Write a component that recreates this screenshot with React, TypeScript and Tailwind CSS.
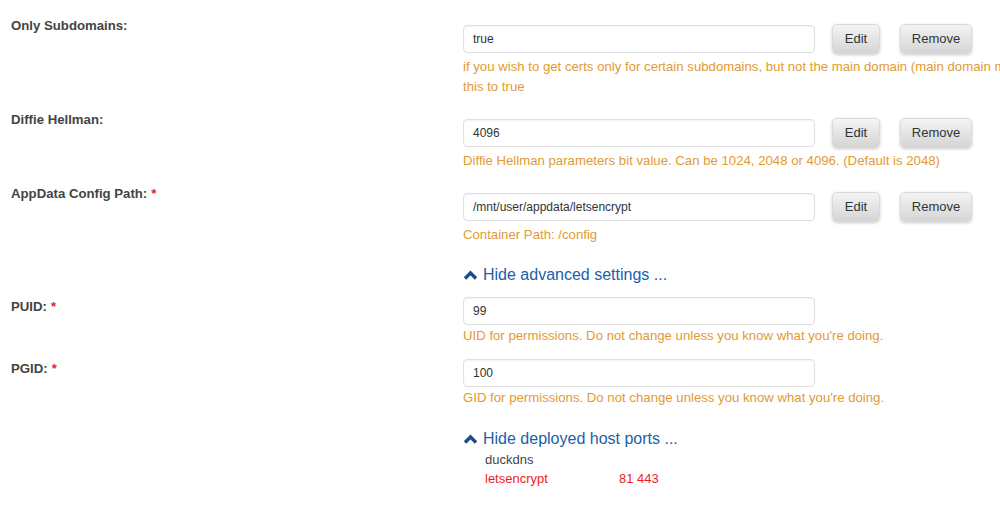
import React from 'react';

const font = "font-['Liberation_Sans',Arial,sans-serif]";

const Label: React.FC<{ text: string; required?: boolean }> = ({ text, required }) => (
    <div className="w-[463px] shrink-0 pl-[11px] text-[13.2px] leading-5 font-bold text-[#444]">
        {text}
        {required && <span className="ml-[4px] text-[#e21f1f]">*</span>}
    </div>
);

const Field: React.FC<{ value: string }> = ({ value }) => (
    <div className="w-[352px] h-[28px] flex items-center px-[9px] bg-white border border-[#e0e0e0] rounded-[4px] shadow-[inset_0_1px_2px_rgba(0,0,0,0.06)] text-[12px] text-[#333]">
        {value}
    </div>
);

const Btn: React.FC<{ label: string; className: string }> = ({ label, className }) => (
    <button className={`h-[30px] rounded-[5px] bg-gradient-to-b from-[#f4f4f4] to-[#d5d5d5] border border-[#dadada] shadow-[0_1px_3px_rgba(0,0,0,0.22)] text-[13px] text-[#333] ${className}`}>
        {label}
    </button>
);

const Desc: React.FC<{ children: React.ReactNode; className?: string }> = ({ children, className = '' }) => (
    <div className={`text-[13.2px] leading-5 text-[#e29a34] whitespace-nowrap ${className}`}>{children}</div>
);

const Toggle: React.FC<{ text: string; className?: string }> = ({ text, className = '' }) => (
    <div className={`flex items-center h-[22px] text-[16px] text-[#2060a8] ${className}`}>
        <svg width="15" height="10" viewBox="0 0 15 10" className="mr-[5px]">
            <polyline points="2,8.5 7.5,3 13,8.5" fill="none" stroke="#164d8c" strokeWidth="3.4" />
        </svg>
        {text}
    </div>
);

export default function App() {
    return (
        <div className={`w-[1000px] h-[506px] overflow-hidden bg-white ${font}`}>
            <div className="pt-[16px]">
                {/* Only Subdomains */}
                <div className="flex">
                    <Label text="Only Subdomains:" />
                    <div className="pt-[8px]">
                        <div className="flex items-center h-[30px]">
                            <Field value="true" />
                            <Btn label="Edit" className="w-[48px] ml-[17px]" />
                            <Btn label="Remove" className="w-[72px] ml-[20px]" />
                        </div>
                        <Desc className="mt-[3px]">
                            if you wish to get certs only for certain subdomains, but not the main domain (main domain may be hosted on another machine and cannot be validated), set
                            <br />
                            this to true
                        </Desc>
                    </div>
                </div>

                {/* Diffie Hellman */}
                <div className="flex mt-[13px]">
                    <Label text="Diffie Hellman:" />
                    <div className="pt-[8px]">
                        <div className="flex items-center h-[30px]">
                            <Field value="4096" />
                            <Btn label="Edit" className="w-[48px] ml-[17px]" />
                            <Btn label="Remove" className="w-[72px] ml-[20px]" />
                        </div>
                        <Desc className="mt-[3px]">Diffie Hellman parameters bit value. Can be 1024, 2048 or 4096. (Default is 2048)</Desc>
                    </div>
                </div>

                {/* AppData */}
                <div className="flex mt-[13px]">
                    <Label text="AppData Config Path:" required />
                    <div className="pt-[8px]">
                        <div className="flex items-center h-[30px]">
                            <Field value="/mnt/user/appdata/letsencrypt" />
                            <Btn label="Edit" className="w-[48px] ml-[17px]" />
                            <Btn label="Remove" className="w-[72px] ml-[20px]" />
                        </div>
                        <Desc className="mt-[3px]">Container Path: /config</Desc>
                    </div>
                </div>

                <div className="flex mt-[19px]">
                    <div className="w-[463px] shrink-0" />
                    <Toggle text="Hide advanced settings ..." />
                </div>

                {/* PUID */}
                <div className="flex mt-[11px]">
                    <Label text="PUID:" required />
                    <div>
                        <Field value="99" />
                        <Desc className="mt-[1px]">UID for permissions. Do not change unless you know what you're doing.</Desc>
                    </div>
                </div>

                {/* PGID */}
                <div className="flex mt-[13px]">
                    <Label text="PGID:" required />
                    <div>
                        <Field value="100" />
                        <Desc className="mt-[1px]">GID for permissions. Do not change unless you know what you're doing.</Desc>
                    </div>
                </div>

                <div className="flex mt-[20px]">
                    <div className="w-[463px] shrink-0" />
                    <div>
                        <Toggle text="Hide deployed host ports ..." />
                        <div className="pl-[22px] text-[13px] leading-[19px]">
                            <div className="text-[#444]">duckdns</div>
                            <div className="flex text-[#f01c1c]">
                                <span className="w-[134px]">letsencrypt</span>
                                <span>81 443</span>
                            </div>
                        </div>
                    </div>
                </div>
            </div>
        </div>
    );
}
